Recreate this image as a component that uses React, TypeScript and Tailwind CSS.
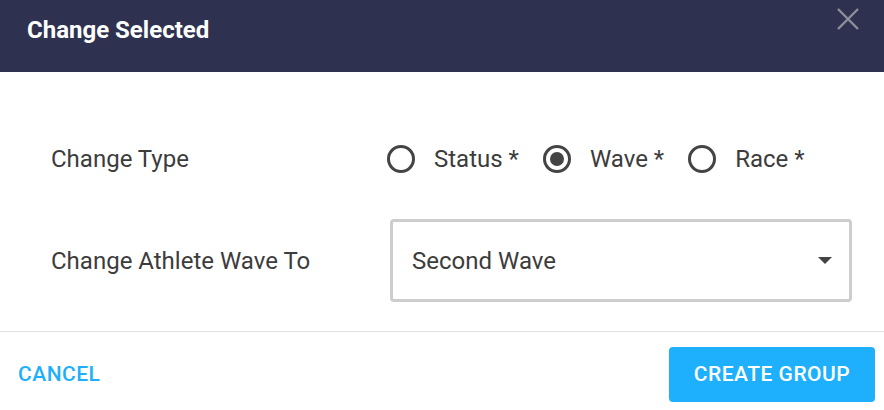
const font = { fontFamily: "Roboto, 'Noto Sans', sans-serif" }

function Radio({ label, checked }: { label: string; checked?: boolean }) {
  return (
    <label className="flex items-center">
      <span className="flex h-[28px] w-[28px] items-center justify-center rounded-full border-[3px] border-[#444]">
        {checked && <span className="h-[14px] w-[14px] rounded-full bg-[#444]" />}
      </span>
      <span className="ml-[19px] text-[24px] leading-none text-[#3c3c3c]">{label}</span>
    </label>
  )
}

export default function App() {
  return (
    <div className="h-[410px] w-[884px] bg-white" style={font}>
      <div className="flex h-[72px] items-start justify-between bg-[#2e3250] pl-[27px] pr-[25px]">
        <h2 className="mt-[16px] text-[24px] font-bold leading-[28px] text-white">Change Selected</h2>
        <svg width="22" height="22" viewBox="0 0 22 22" className="mt-[8px]">
          <path d="M1 1 L21 21 M21 1 L1 21" stroke="#8d8f9b" strokeWidth="2.4" />
        </svg>
      </div>

      <div className="h-[260px] border-b border-[#e0e0e0] pl-[51px] pr-[32px] pt-[71px]">
        <div className="flex h-[32px] items-center">
          <div className="w-[336px] text-[24px] leading-none text-[#3c3c3c]">Change Type</div>
          <div className="flex items-center gap-[24px]">
            <Radio label="Status *" />
            <Radio label="Wave *" checked />
            <Radio label="Race *" />
          </div>
        </div>
        <div className="mt-[44px] flex items-center">
          <div className="w-[339px] text-[24px] leading-none text-[#3c3c3c]">Change Athlete Wave To</div>
          <div className="flex h-[83px] w-[462px] items-center justify-between rounded-[4px] border-[3px] border-[#cdcdcd] pl-[19px] pr-[17px]">
            <span className="text-[24px] leading-none text-[#3c3c3c]">Second Wave</span>
            <svg width="14" height="8" viewBox="0 0 14 8">
              <path d="M0 0 L14 0 L7 7 Z" fill="#444" />
            </svg>
          </div>
        </div>
      </div>

      <div className="flex items-center justify-between pl-[18px] pr-[9px] pt-[15px]">
        <button className="text-[21px] font-medium leading-none tracking-[0.5px] text-[#1eaffc]">CANCEL</button>
        <button className="h-[55px] w-[206px] rounded-[4px] bg-[#1eb0fc] text-[21px] font-medium leading-none tracking-[0.5px] text-white">
          CREATE GROUP
        </button>
      </div>
    </div>
  )
}
